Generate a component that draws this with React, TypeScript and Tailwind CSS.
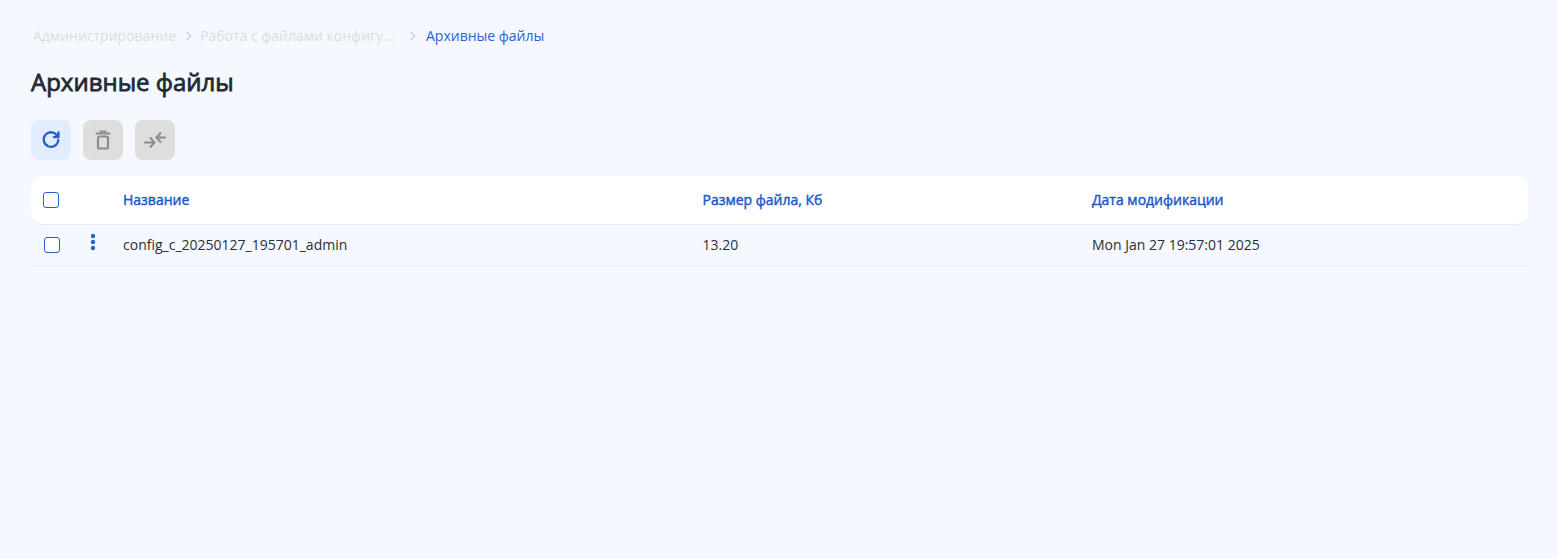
import { ChevronRight } from 'lucide-react';

function RefreshIcon() {
  return (
    <svg width="24" height="24" viewBox="0 0 24 24" fill="none" stroke="#2560d0" strokeWidth="2.3" strokeLinecap="round" strokeLinejoin="round">
      <path d="M18.5 8.2A7.3 7.3 0 1 0 19.3 12" />
      <path d="M19.5 4.5v4.6h-4.6" fill="#2560d0" />
    </svg>
  );
}

function TrashIcon() {
  return (
    <svg width="24" height="24" viewBox="0 0 24 24" fill="none" stroke="#8c8c8c" strokeWidth="2.2" strokeLinecap="round" strokeLinejoin="round">
      <path d="M5.5 5.5h13" />
      <path d="M9.5 3.5h5" />
      <rect x="7" y="8.5" width="10" height="12" rx="1.5" />
    </svg>
  );
}

function CollapseIcon() {
  return (
    <svg width="24" height="24" viewBox="0 0 24 24" fill="none" stroke="#8c8c8c" strokeWidth="2" strokeLinecap="round" strokeLinejoin="round">
      <path d="M2 14.5h9" />
      <path d="M7.5 10l4 4.5-4 4.5" />
      <path d="M13.5 9.5H22" />
      <path d="M17.5 5l-4 4.5 4 4.5" />
    </svg>
  );
}

function Checkbox() {
  return <div className="w-4 h-4 rounded-[3px] border border-[#2560d0] bg-white" />;
}

export default function App() {
  return (
    <div className="min-h-[559px] bg-[#f5f8ff] px-[31px] pt-[25px] font-['Open_Sans',sans-serif]">
      <nav className="flex items-center h-[22px] text-[14px] leading-[22px] pl-[2px]">
        <span className="text-[#dcdcdc]">Администрирование</span>
        <ChevronRight size={14} className="text-[#b9cdf5] ml-[6px] mr-[4px]" />
        <span className="text-[#dcdcdc] w-[206px]">Работа с файлами конфигу...</span>
        <ChevronRight size={14} className="text-[#b9cdf5] mr-[6px]" />
        <span className="text-[#2b62d9]">Архивные файлы</span>
      </nav>

      <h1 className="mt-[18px] text-[24px] leading-[34px] font-normal text-[#1f2a33] [-webkit-text-stroke:0.8px_#1f2a33]">Архивные файлы</h1>

      <div className="flex gap-3 mt-[21px]">
        <button className="w-10 h-10 rounded-lg bg-[#e1edff] flex items-center justify-center">
          <RefreshIcon />
        </button>
        <button className="w-10 h-10 rounded-lg bg-[#dedede] flex items-center justify-center">
          <TrashIcon />
        </button>
        <button className="w-10 h-10 rounded-lg bg-[#dedede] flex items-center justify-center">
          <CollapseIcon />
        </button>
      </div>

      <div className="mt-4 w-[1497px]">
        <div className="flex items-center h-[49px] bg-white rounded-xl border-b border-[#e1ebf8] text-[14px] text-[#2058c8] [-webkit-text-stroke:0.45px_#2058c8]">
          <div className="w-[92px] pl-3">
            <Checkbox />
          </div>
          <div className="w-[579.5px] pb-[2px]">Название</div>
          <div className="w-[389.5px] pb-[2px]">Размер файла, Кб</div>
          <div className="pb-[2px]">Дата модификации</div>
        </div>
        <div className="flex items-center h-[41px] border-b border-[#e6edf7] text-[14px] text-[#2a2f36]">
          <div className="w-[92px] pl-[13px] flex items-center">
            <Checkbox />
            <svg width="6" height="18" viewBox="0 0 6 18" className="ml-[30px] -mt-[6px]" fill="#2560d0">
              <circle cx="3" cy="3" r="2.2" />
              <circle cx="3" cy="9" r="2.2" />
              <circle cx="3" cy="15" r="2.2" />
            </svg>
          </div>
          <div className="w-[579.5px] pb-[2px]">config_c_20250127_195701_admin</div>
          <div className="w-[389.5px] pb-[2px]">13.20</div>
          <div className="pb-[2px]">Mon Jan 27 19:57:01 2025</div>
        </div>
      </div>
    </div>
  );
}
